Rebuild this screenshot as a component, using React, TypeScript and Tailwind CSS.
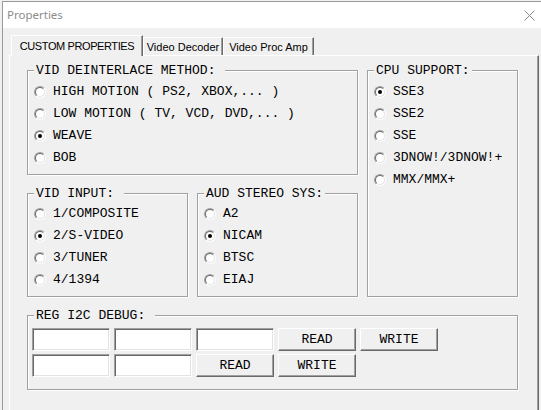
import React from "react";

const mono = { fontFamily: '"Liberation Mono", "Courier New", monospace' };

function Radio({ checked }: { checked?: boolean }) {
  return (
    <span className="relative inline-block w-[12px] h-[12px] shrink-0 rounded-full border border-t-[#a0a0a0] border-l-[#a0a0a0] border-r-white border-b-white">
      <span className="absolute inset-0 rounded-full border border-t-[#696969] border-l-[#696969] border-r-[#e3e3e3] border-b-[#e3e3e3] bg-white" />
      {checked && <span className="absolute left-[3px] top-[3px] w-[4px] h-[4px] rounded-full bg-black" />}
    </span>
  );
}

function Group({ label, className, children }: { label: string; className: string; children?: React.ReactNode }) {
  return (
    <div className={"relative border border-[#a0a0a0] shadow-[inset_1px_1px_0_#ffffff,1px_1px_0_#ffffff] " + className}>
      <span className="absolute -top-[8px] left-[6px] bg-[#f0f0f0] pl-[2px] pr-[2px] text-[13px] leading-[16px] text-black whitespace-pre">
        {label}
      </span>
      {children}
    </div>
  );
}

function RadioList({ items, checked, pt }: { items: string[]; checked: number; pt: string }) {
  return (
    <div className={"flex flex-col pl-[6px] " + pt}>
      {items.map((t, i) => (
        <div key={i} className="flex items-center h-[22px] gap-[7px]">
          <Radio checked={i === checked} />
          <span className="text-[13px] leading-[16px] text-black whitespace-pre">{t}</span>
        </div>
      ))}
    </div>
  );
}

function TextBox() {
  return (
    <div className="w-[78px] h-[23px] bg-white border border-t-[#a0a0a0] border-l-[#a0a0a0] border-r-white border-b-white shadow-[inset_1px_1px_0_#696969,inset_-1px_-1px_0_#e3e3e3]" />
  );
}

function Btn({ label }: { label: string }) {
  return (
    <div className="w-[78px] h-[23px] flex items-center justify-center bg-[#f0f0f0] border border-t-white border-l-white border-r-[#696969] border-b-[#696969] shadow-[inset_-1px_-1px_0_#a0a0a0] text-[13px] leading-[16px] text-black">
      {label}
    </div>
  );
}

export default function App() {
  return (
    <div className="w-[541px] h-[410px] overflow-hidden bg-[#f0f0f0] pl-[2px] pt-[1px]">
      <div className="h-[420px] border-l border-t border-[#9a9a9a] bg-[#f0f0f0]">
        {/* title bar */}
        <div className="h-[26px] bg-white flex items-center justify-between pl-[4px] pr-[6px]">
          <span className="text-[11.5px] text-[#8c8c8c]" style={{ fontFamily: '"Noto Sans", sans-serif' }}>
            Properties
          </span>
          <svg width="11" height="11" viewBox="0 0 11 11" className="mt-[1px]">
            <path d="M0.5 0.5 L10.5 10.5 M10.5 0.5 L0.5 10.5" stroke="#8a8a8a" strokeWidth="1" fill="none" />
          </svg>
        </div>

        {/* tabs */}
        <div
          className="mt-[7px] ml-[8px] h-[20px] flex items-end text-[11px] text-black"
          style={{ fontFamily: '"Liberation Sans", Arial, sans-serif' }}
        >
          <div className="relative z-10 -mb-[1px] w-[132px] h-[21px] flex items-center justify-center bg-[#f0f0f0] border-t border-l border-white border-r border-r-[#696969] shadow-[inset_-1px_0_0_#a0a0a0] tracking-[-0.4px]">
            CUSTOM PROPERTIES
          </div>
          <div className="w-[80px] h-[18px] flex items-center justify-center pt-[1px] border-t border-l border-white border-r border-r-[#696969] shadow-[inset_-1px_0_0_#a0a0a0]">
            Video Decoder
          </div>
          <div className="w-[91px] h-[18px] flex items-center justify-center pt-[1px] border-t border-l border-white border-r border-r-[#696969] shadow-[inset_-1px_0_0_#a0a0a0]">
            Video Proc Amp
          </div>
        </div>

        {/* panel */}
        <div
          className="ml-[6px] w-[530px] h-[370px] border-t border-l border-white border-r border-r-[#696969] shadow-[inset_-1px_0_0_#a0a0a0] pl-[17px] pt-[14px]"
          style={mono}
        >
          <div className="flex gap-[9px]">
            <div className="flex flex-col w-[331px]">
              <Group label="VID DEINTERLACE METHOD: " className="h-[105px]">
                <RadioList
                  pt="pt-[10px]"
                  checked={2}
                  items={["HIGH MOTION ( PS2, XBOX,... )", "LOW MOTION ( TV, VCD, DVD,... )", "WEAVE", "BOB"]}
                />
              </Group>
              <div className="mt-[18px] flex gap-[9px]">
                <Group label="VID INPUT: " className="w-[161px] h-[104px]">
                  <RadioList pt="pt-[9px]" checked={1} items={["1/COMPOSITE", "2/S-VIDEO", "3/TUNER", "4/1394"]} />
                </Group>
                <Group label="AUD STEREO SYS:" className="w-[161px] h-[104px]">
                  <RadioList pt="pt-[9px]" checked={1} items={["A2", "NICAM", "BTSC", "EIAJ"]} />
                </Group>
              </div>
            </div>
            <Group label="CPU SUPPORT:" className="w-[151px] h-[227px]">
              <RadioList pt="pt-[10px]" checked={0} items={["SSE3", "SSE2", "SSE", "3DNOW!/3DNOW!+", "MMX/MMX+"]} />
            </Group>
          </div>

          <Group label="REG I2C DEBUG: " className="mt-[18px] w-[491px] h-[75px]">
            <div className="pl-[4px] pt-[12px] flex flex-col gap-[3px]">
              <div className="flex gap-[4px]">
                <TextBox />
                <TextBox />
                <TextBox />
                <Btn label="READ" />
                <Btn label="WRITE" />
              </div>
              <div className="flex gap-[4px]">
                <TextBox />
                <TextBox />
                <Btn label="READ" />
                <Btn label="WRITE" />
              </div>
            </div>
          </Group>
        </div>
      </div>
    </div>
  );
}
